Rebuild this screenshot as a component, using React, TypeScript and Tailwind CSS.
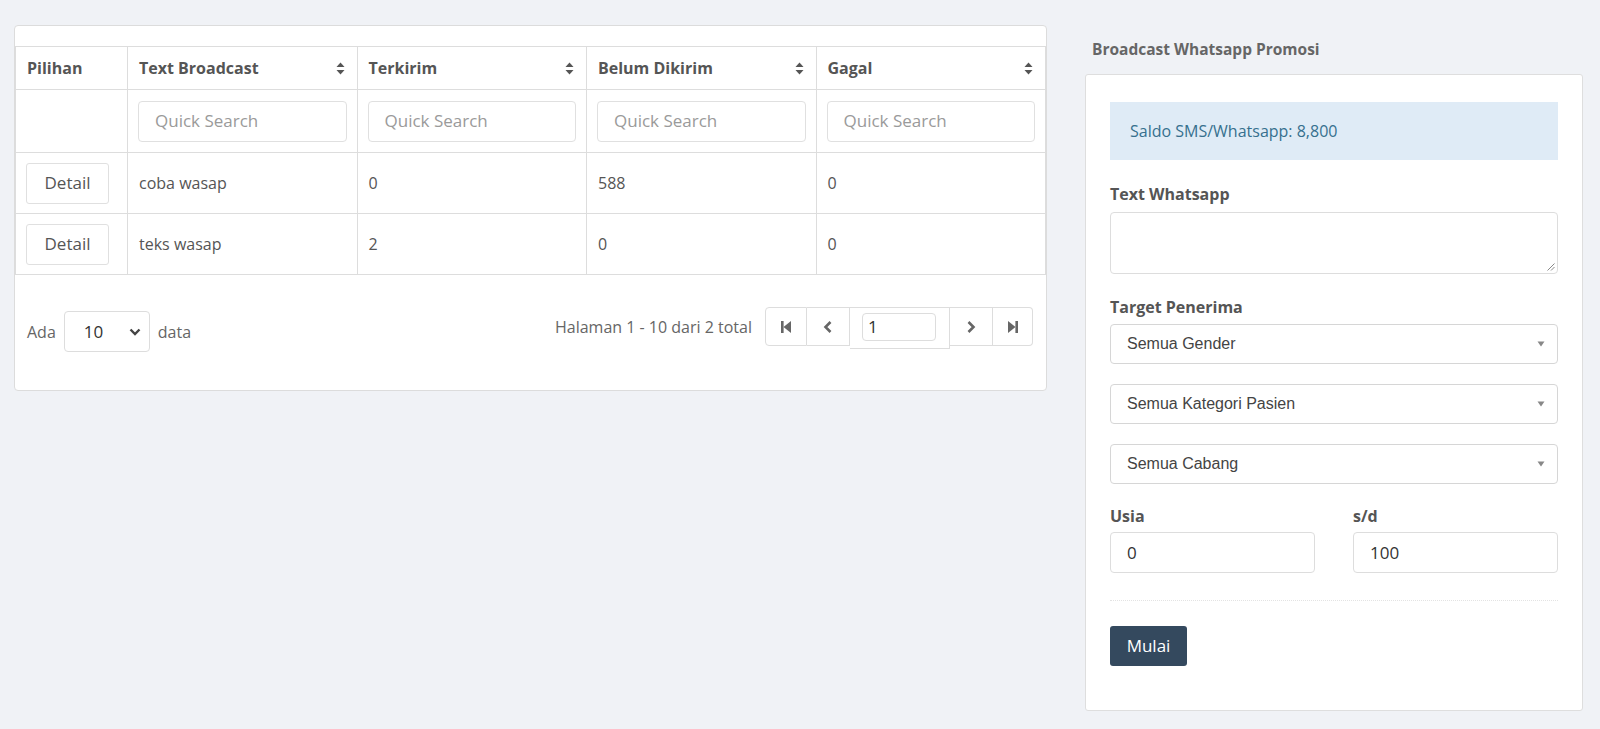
import React from "react";

const SortIcon = () => (
  <svg width="9" height="13" viewBox="0 0 9 13" className="shrink-0">
    <path d="M4.5 0.5 L8.5 5 H0.5 Z" fill="#555" />
    <path d="M4.5 12.5 L8.5 8 H0.5 Z" fill="#555" />
  </svg>
);

const FirstIcon = () => (
  <svg width="12" height="14" viewBox="0 0 12 14">
    <rect x="1" y="1" width="2.6" height="12" fill="#666" />
    <path d="M11 1 V13 L3.5 7 Z" fill="#666" />
  </svg>
);
const LastIcon = () => (
  <svg width="12" height="14" viewBox="0 0 12 14">
    <rect x="8.4" y="1" width="2.6" height="12" fill="#666" />
    <path d="M1 1 V13 L8.5 7 Z" fill="#666" />
  </svg>
);
const PrevIcon = () => (
  <svg width="12" height="14" viewBox="0 0 12 14">
    <path d="M8.5 2 L3.5 7 L8.5 12" stroke="#666" strokeWidth="2.6" fill="none" strokeLinejoin="miter" />
  </svg>
);
const NextIcon = () => (
  <svg width="12" height="14" viewBox="0 0 12 14">
    <path d="M3.5 2 L8.5 7 L3.5 12" stroke="#666" strokeWidth="2.6" fill="none" strokeLinejoin="miter" />
  </svg>
);

const ChevronDown = () => (
  <svg width="12" height="8" viewBox="0 0 12 8">
    <path d="M1.5 1.5 L6 6 L10.5 1.5" stroke="#444" strokeWidth="2.4" fill="none" />
  </svg>
);

const SmallTri = () => (
  <svg width="8" height="6" viewBox="0 0 8 6">
    <path d="M0.5 0.5 H7.5 L4 5.5 Z" fill="#888" />
  </svg>
);

const font = "font-['Open_Sans',_'Noto_Sans',_sans-serif]";
const arial = "font-['Liberation_Sans',_Arial,_sans-serif]";

const headers = ["Text Broadcast", "Terkirim", "Belum Dikirim", "Gagal"];
const rows = [
  ["coba wasap", "0", "588", "0"],
  ["teks wasap", "2", "0", "0"],
];

function SelectBox({ label }: { label: string }) {
  return (
    <div className={`flex h-[40px] items-center justify-between rounded-[4px] border border-[#d6d6d6] bg-white pl-[16px] pr-[12px] text-[16px] text-[#444] ${arial}`}>
      <span>{label}</span>
      <SmallTri />
    </div>
  );
}

export default function App() {
  return (
    <div className={`min-h-[729px] w-[1600px] bg-[#f0f2f6] ${font}`}>
      <div className="flex items-start pl-[14px] pt-[25px]">
        {/* Left card */}
        <div className="w-[1033px] rounded-[4px] border border-[#dcdcdc] bg-white pt-[20px]">
          <table className="w-full table-fixed border-collapse text-[16px] text-[#555]">
            <thead>
              <tr className="h-[43px]">
                <th className="w-[112px] border border-[#ddd] px-[11px] text-left font-bold">Pilihan</th>
                {headers.map((h) => (
                  <th key={h} className="border border-[#ddd] pl-[11px] pr-[12px] text-left font-bold">
                    <div className="flex items-center justify-between">
                      <span>{h}</span>
                      <SortIcon />
                    </div>
                  </th>
                ))}
              </tr>
            </thead>
            <tbody>
              <tr className="h-[63px]">
                <td className="border border-[#ddd]"></td>
                {headers.map((h) => (
                  <td key={h} className="border border-[#ddd] px-[10px]">
                    <div className="flex h-[41px] items-center rounded-[4px] border border-[#e0e0e0] px-[16px] text-[17px] text-[#9a9a9a]">
                      Quick Search
                    </div>
                  </td>
                ))}
              </tr>
              {rows.map((r, i) => (
                <tr key={i} className="h-[61px]">
                  <td className="border border-[#ddd] px-[10px]">
                    <div className="flex h-[41px] w-[83px] items-center justify-center rounded-[3px] border border-[#e0e0e0] text-[17px] text-[#555]">
                      Detail
                    </div>
                  </td>
                  {r.map((c, j) => (
                    <td key={j} className="border border-[#ddd] px-[11px]">
                      {c}
                    </td>
                  ))}
                </tr>
              ))}
            </tbody>
          </table>
          <div className="flex items-start justify-between pb-[38px] pl-[12px] pr-[13px] pt-[32px] text-[16px] text-[#666]">
            <div className="mt-[4px] flex items-center gap-[8px]">
              <span>Ada</span>
              <div className="flex h-[41px] w-[86px] items-center justify-between rounded-[4px] border border-[#ddd] pl-[19px] pr-[8px] text-[17px] text-[#333]">
                <span>10</span>
                <ChevronDown />
              </div>
              <span>data</span>
            </div>
            <div className="flex items-start gap-[13px]">
              <span className="mt-[8px]">Halaman 1 - 10 dari 2 total</span>
              <div className="flex items-start">
                <div className="flex h-[39px] w-[42px] items-center justify-center rounded-l-[4px] border border-[#ddd]">
                  <FirstIcon />
                </div>
                <div className="flex h-[39px] w-[43px] items-center justify-center border-y border-r border-[#ddd]">
                  <PrevIcon />
                </div>
                <div className="flex h-[42px] w-[100px] items-start border-b border-r border-t border-[#ddd] px-[12px] pt-[5px]">
                  <div className="flex h-[28px] w-[74px] items-center rounded-[4px] border border-[#ddd] px-[5px] text-[17px] text-[#333]">
                    1
                  </div>
                </div>
                <div className="flex h-[39px] w-[43px] items-center justify-center border-y border-r border-[#ddd]">
                  <NextIcon />
                </div>
                <div className="flex h-[39px] w-[40px] items-center justify-center rounded-r-[4px] border-y border-r border-[#ddd]">
                  <LastIcon />
                </div>
              </div>
            </div>
          </div>
        </div>

        {/* Right column */}
        <div className="ml-[38px] w-[498px] pt-[13px]">
          <div className="pl-[7px] text-[15.5px] font-bold leading-[22px] text-[#666]">Broadcast Whatsapp Promosi</div>
          <div className="mt-[14px] rounded-[3px] border border-[#dedede] bg-white px-[24px] pb-[44px] pt-[27px]">
            <div className="flex h-[58px] items-center bg-[#dfebf6] px-[20px] text-[16px] text-[#36708e]">
              Saldo SMS/Whatsapp: 8,800
            </div>
            <div className="mt-[23px] text-[16px] font-bold leading-[22px] text-[#555]">Text Whatsapp</div>
            <div className="relative mt-[7px] h-[62px] rounded-[4px] border border-[#ddd]">
              <svg width="9" height="9" viewBox="0 0 9 9" className="absolute bottom-[2px] right-[2px]">
                <path d="M8.5 1.5 L1.5 8.5 M8.5 5 L5 8.5" stroke="#888" strokeWidth="1" />
              </svg>
            </div>
            <div className="mt-[22px] text-[16px] font-bold leading-[22px] text-[#555]">Target Penerima</div>
            <div className="mt-[6px] flex flex-col gap-[20px]">
              <SelectBox label="Semua Gender" />
              <SelectBox label="Semua Kategori Pasien" />
              <SelectBox label="Semua Cabang" />
            </div>
            <div className="mt-[21px] grid grid-cols-2 gap-x-[38px]">
              <div>
                <div className="text-[16px] font-bold leading-[22px] text-[#555]">Usia</div>
                <div className="mt-[5px] flex h-[41px] items-center rounded-[4px] border border-[#ddd] px-[16px] text-[17px] text-[#333]">0</div>
              </div>
              <div>
                <div className="text-[16px] font-bold leading-[22px] text-[#555]">s/d</div>
                <div className="mt-[5px] flex h-[41px] items-center rounded-[4px] border border-[#ddd] px-[16px] text-[17px] text-[#333]">100</div>
              </div>
            </div>
            <div className="mt-[27px] border-t border-dotted border-[#e3e3e3]"></div>
            <div className="mt-[25px] flex h-[40px] w-[77px] items-center justify-center rounded-[3px] bg-[#34495e] text-[17px] text-white">
              Mulai
            </div>
          </div>
        </div>
      </div>
    </div>
  );
}
